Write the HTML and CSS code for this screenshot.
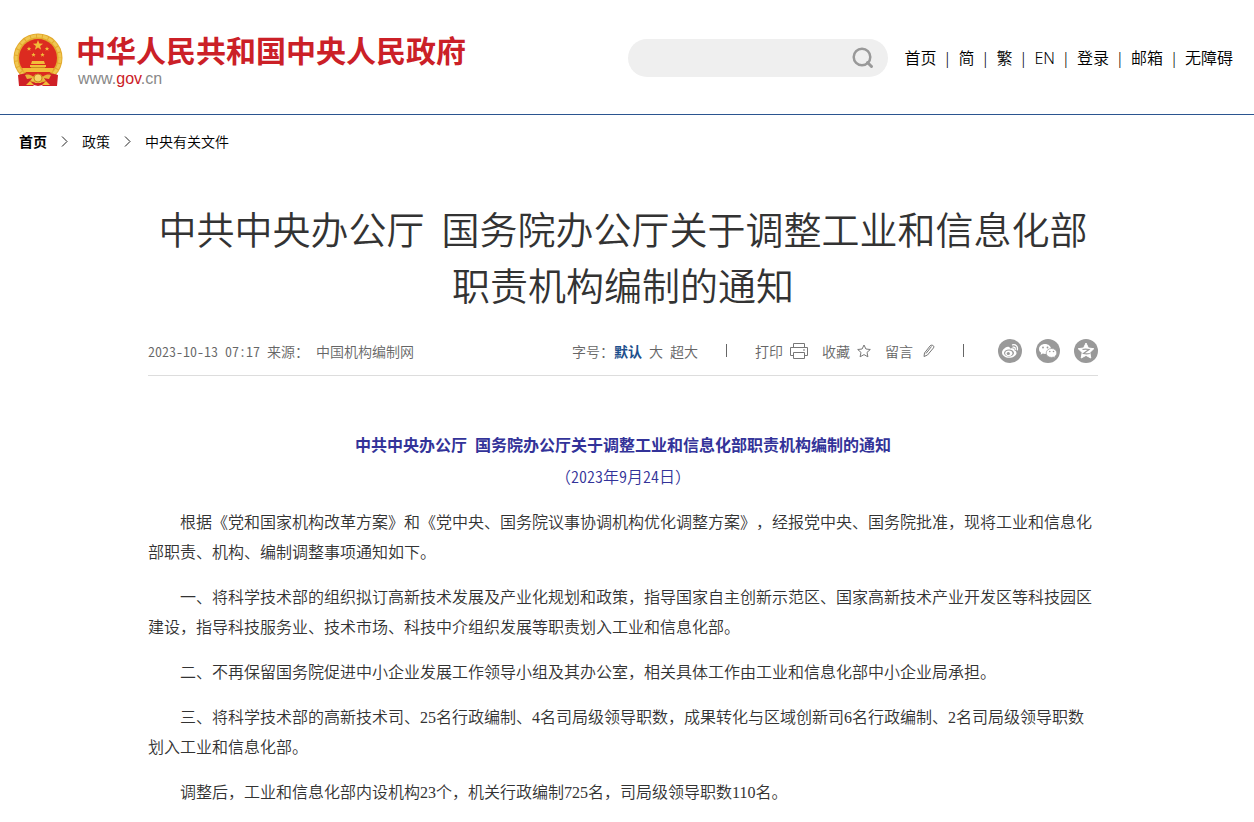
FILE: index.html
```html
<!DOCTYPE html>
<html lang="zh-CN">
  <head>
    <meta charset="UTF-8" />
    <meta name="viewport" content="width=device-width, initial-scale=1.0" />
    <title>中共中央办公厅 国务院办公厅关于调整工业和信息化部职责机构编制的通知</title>
    <link rel="stylesheet" href="styles.css">
  </head>
  <body>
    <header class="header">
      <a class="logo" href="#">
        <svg class="emblem" viewBox="0 0 50 54" aria-hidden="true">
          <path d="M7 36 L6 52 L16 51 L25 53 L34 51 L44 52 L43 36 Z" fill="#cf2027" />
          <circle cx="25" cy="25" r="24.5" fill="#e3a92c" />
          <circle cx="25" cy="25" r="22" fill="none" stroke="#efc650" stroke-width="3" stroke-dasharray="5 1" />
          <circle cx="25" cy="25" r="19" fill="#dc2b20" />
          <path d="M25 7 l1.300 3.600 3.800 .1 -3 2.300 1 3.700 -3.100 -2.200 -3.100 2.200 1 -3.700 -3 -2.300 3.800 -.1z" fill="#f2bd3a" />
          <g fill="#f2bd3a">
            <path id="s" d="M16 13.500l.6 1.500 1.600.100-1.200 1 .4 1.600-1.400-.9-1.400.9.4-1.600-1.200-1 1.600-.1z" />
            <use href="#s" x="18" />
            <use href="#s" x="4.500" y="6" />
            <use href="#s" x="13.500" y="6" />
          </g>
          <path d="M19 28h12l1 3h-14z M17 32h16v2h-16z M9 35h32l-2 4H11z" fill="#f2bd3a" />
          <path d="M18 34.500h14" stroke="#c98a20" />
          <path d="M5 42l8-2 7 4-3 4 4 5H6z M45 42l-8-2-7 4 3 4-4 5h15z" fill="#cf2027" />
          <path d="M12 42c4-1 6 0 8 2l5 2 5-2c2-2 4-3 8-2l-2 4-6-1-2 5h-6l-2-5-6 1z" fill="#e9b43a" />
          <circle cx="25" cy="45" r="4" fill="#f6d36a" stroke="#c98a20" />
          <path d="M13 52l4-4 4 4z M37 52l-4-4-4 4z" fill="#f2bd3a" />
        </svg>
        <span class="logo-text">
          <strong class="logo-name">中华人民共和国中央人民政府</strong>
          <span class="logo-url">www.<em>gov</em>.cn</span>
        </span>
      </a>
      <div class="header-right">
        <form class="search" role="search">
          <input class="search-input" type="text" aria-label="搜索" />
          <button class="search-btn" type="button" aria-label="搜索">
            <svg width="22" height="22" viewBox="0 0 22 22" fill="none" stroke="#999" stroke-width="2.500">
              <circle cx="10" cy="10" r="8.300" />
              <path d="M15.500 15.500l4 4" stroke-width="3" stroke-linecap="round" />
            </svg>
          </button>
        </form>
        <nav class="top-nav">
          <a href="#">首页</a><i>|</i>
          <a href="#">简</a><i>|</i>
          <a href="#">繁</a><i>|</i>
          <a href="#">EN</a><i>|</i>
          <a href="#">登录</a><i>|</i>
          <a href="#">邮箱</a><i>|</i>
          <a href="#">无障碍</a>
        </nav>
      </div>
    </header>

    <nav class="crumbs">
      <a class="crumb-home" href="#">首页</a>
      <svg class="chevron" viewBox="0 0 7 11"><path d="M1 .5l5 5-5 5" /></svg>
      <a href="#">政策</a>
      <svg class="chevron" viewBox="0 0 7 11"><path d="M1 .5l5 5-5 5" /></svg>
      <a href="#">中央有关文件</a>
    </nav>

    <main class="main">
      <h1 class="title">中共中央办公厅&nbsp; 国务院办公厅关于调整工业和信息化部<br>职责机构编制的通知</h1>

      <div class="meta">
        <div class="source">
          <span>2023-10-13</span>
          <span>07:17</span>
          <span>来源：</span>
          <span>中国机构编制网</span>
        </div>
        <div class="tools">
          <div class="font-size">
            <span>字号：<a class="active" href="#">默认</a></span>
            <a href="#">大</a>
            <a href="#">超大</a>
          </div>
          <span class="bar"></span>
          <div class="actions">
            <a href="#">打印
              <svg width="18" height="18" viewBox="0 0 18 18" fill="none" stroke="#777">
                <path d="M3.500 5.500v-4h11v4M3.500 13.500h-3v-8h17v8h-3M3.500 10.500h11v6h-11zM13 8h2" />
              </svg>
            </a>
            <a href="#">收藏
              <svg width="14" height="14" viewBox="0 0 14 14" fill="none" stroke="#777">
                <path d="M7 1l1.900 4 4.400.500-3.300 2.900.9 4.400L7 10.600l-3.900 2.200.9-4.400L.7 5.500 5.100 5z" />
              </svg>
            </a>
            <a class="comment" href="#">留言
              <svg width="12" height="14" viewBox="0 0 12 14" fill="none" stroke="#777">
                <path d="M1 12.500l.5-3.500L7 2q1-1.200 2.200-.8l1.300.7q.8.800 0 2L4.500 11zM8.500 2.500L3 9.500" />
              </svg>
            </a>
          </div>
          <span class="bar"></span>
          <div class="share">
            <a href="#" aria-label="微博">
              <svg width="24" height="24" viewBox="0 0 24 24">
                <circle cx="12" cy="12" r="12" fill="#999" />
                <path d="M11 8c-2-1.500-7 2.300-7 5.500s3.500 5.300 7 5.300c4.400 0 7.500-2.300 7.500-4.800 0-1.600-1.300-2.400-2.200-2.700.6-2-1.500-2.700-4.300-1.700 0-.8-.3-1.300-1-1.600z" fill="#fff" />
                <ellipse cx="11" cy="14" rx="5" ry="3.500" fill="#999" />
                <ellipse cx="10.800" cy="14.200" rx="3.600" ry="2.800" fill="#fff" />
                <circle cx="10.300" cy="14.500" r="1.600" fill="#999" />
                <path d="M14.500 5.800c3.500-.6 5.600 1.800 4.800 5M15 8.100c1.600-.2 2.500.7 2.200 2.200" fill="none" stroke="#fff" stroke-width="1.300" stroke-linecap="round" />
              </svg>
            </a>
            <a href="#" aria-label="微信">
              <svg width="24" height="24" viewBox="0 0 24 24">
                <circle cx="12" cy="12" r="12" fill="#999" />
                <path d="M9 5c-3.400 0-6 2.200-6 5 0 1.600.8 2.900 2.100 3.800l-.5 1.900 2.200-1.100c.7.200 1.500.3 2.200.3 3.400 0 6-2.200 6-4.900S12.400 5 9 5z" fill="#fff" />
                <path d="M15.500 9.500c-3 0-5.300 2-5.300 4.500s2.300 4.400 5.300 4.400c.7 0 1.300-.1 1.900-.3l1.900 1-.5-1.700c1.200-.8 2-2 2-3.400 0-2.500-2.300-4.500-5.300-4.500z" fill="#fff" stroke="#999" stroke-width=".7" />
                <g fill="#999">
                  <circle cx="7" cy="8.500" r=".9" /><circle cx="11.500" cy="8.500" r=".9" />
                  <circle cx="13.800" cy="12.500" r=".8" /><circle cx="17.500" cy="12.500" r=".8" />
                </g>
              </svg>
            </a>
            <a href="#" aria-label="QQ空间">
              <svg width="24" height="24" viewBox="0 0 24 24">
                <circle cx="12" cy="12" r="12" fill="#999" />
                <path d="M12 4l2.400 5 5.400.7-4 3.800 1 5.500-4.800-2.600L7.200 19l1-5.500-4-3.800 5.400-.7z" fill="#fff" stroke="#fff" stroke-linejoin="round" />
                <path d="M8.500 10.500q3-.7 6.500 0l-5.500 4q3 .6 6.300 0" fill="none" stroke="#999" stroke-width="1.200" />
              </svg>
            </a>
          </div>
        </div>
      </div>

      <article class="article">
        <p class="lead"><b>中共中央办公厅&nbsp; 国务院办公厅关于调整工业和信息化部职责机构编制的通知</b><br>（<span class="date">2023年9月24日</span>）</p>
        <p>根据《党和国家机构改革方案》和《党中央、国务院议事协调机构优化调整方案》，经报党中央、国务院批准，现将工业和信息化部职责、机构、编制调整事项通知如下。</p>
        <p>一、将科学技术部的组织拟订高新技术发展及产业化规划和政策，指导国家自主创新示范区、国家高新技术产业开发区等科技园区建设，指导科技服务业、技术市场、科技中介组织发展等职责划入工业和信息化部。</p>
        <p>二、不再保留国务院促进中小企业发展工作领导小组及其办公室，相关具体工作由工业和信息化部中小企业局承担。</p>
        <p>三、将科学技术部的高新技术司、25名行政编制、4名司局级领导职数，成果转化与区域创新司6名行政编制、2名司局级领导职数划入工业和信息化部。</p>
        <p>调整后，工业和信息化部内设机构23个，机关行政编制725名，司局级领导职数110名。</p>
      </article>
    </main>
  </body>
</html>
```
FILE: styles.css
```css
* {
  box-sizing: border-box;
}

body {
  margin: 0;
  background: #fff;
  color: #333;
  font-family: "Noto Sans CJK SC", sans-serif;
  font-size: 14px;
  font-weight: 350;
  text-spacing-trim: space-all;
}

a {
  color: inherit;
  text-decoration: none;
}

/* header */
.header {
  display: flex;
  justify-content: space-between;
  height: 115px;
  padding: 33px 21px 0 13px;
  border-bottom: 1px solid #2b5590;
}

.logo {
  display: flex;
  align-items: flex-start;
  gap: 13px;
}

.emblem {
  width: 50px;
  height: 54px;
}

.logo-text {
  display: flex;
  flex-direction: column;
  margin-top: -2px;
}

.logo-name {
  color: #cb2027;
  font-size: 30px;
  line-height: 36px;
}

.logo-url {
  padding-left: 2px;
  color: #888;
  font-family: "Liberation Sans", Arial, sans-serif;
  font-size: 16px;
  line-height: 24px;
}

.logo-url em {
  color: #cb2027;
  font-style: normal;
}

.header-right {
  display: flex;
  align-items: center;
  gap: 16px;
  height: 50px;
}

.search {
  display: flex;
  align-items: center;
  width: 260px;
  height: 38px;
  padding: 0 14px 0 18px;
  border-radius: 19px;
  background: #efefef;
}

.search-input {
  flex: 1;
  min-width: 0;
  border: 0;
  outline: 0;
  background: none;
  font-size: 16px;
}

.search-btn {
  display: flex;
  padding: 0;
  border: 0;
  background: none;
  cursor: pointer;
}

.top-nav {
  display: flex;
  color: #000;
  font-family: "Noto Sans", "Noto Sans CJK SC", sans-serif;
  font-size: 16px;
  line-height: 24px;
}

.top-nav i {
  width: 22px;
  font-style: normal;
  text-align: center;
}

/* breadcrumb */
.crumbs {
  display: flex;
  align-items: center;
  gap: 14px;
  padding: 15px 19px 0;
  color: #000;
  line-height: 22px;
}

.crumb-home {
  font-weight: bold;
}

.chevron {
  width: 7px;
  height: 11px;
  fill: none;
  stroke: #222;
}

/* content */
.main {
  max-width: 958px;
  margin: 0 auto;
  padding-right: 8px;
}

.title {
  margin: 48px 0 0;
  font-size: 38px;
  font-weight: 350;
  line-height: 56px;
  text-align: center;
}

.meta {
  display: flex;
  justify-content: space-between;
  align-items: center;
  height: 50px;
  margin-top: 14px;
  border-bottom: 1px solid #ddd;
  color: #666;
  font-feature-settings: "hwid";
}

.source,
.font-size {
  display: flex;
  gap: 7px;
}

.tools {
  display: flex;
  align-items: center;
}

.font-size .active {
  color: #1d4f8c;
  font-weight: bold;
}

.bar {
  width: 1px;
  height: 13px;
  margin: 0 28px;
  background: #666;
}

.actions {
  display: flex;
  gap: 14px;
}

.actions a {
  display: flex;
  align-items: center;
  gap: 7px;
}

.actions .comment {
  gap: 10px;
}

.share {
  display: flex;
  gap: 14px;
  padding-left: 6px;
}

.share a {
  display: flex;
}

/* serif digits are half as wide as the characters */
.article {
  padding-top: 55px;
  font-family: "Liberation Serif", "Noto Sans CJK SC", sans-serif;
  font-size: 16px;
  line-height: 30px;
}

.article p {
  margin: 0 0 15px;
  text-indent: 32px;
}

.article .lead {
  color: #339;
  text-align: center;
  text-indent: 0;
}

.date {
  font-family: "Noto Sans CJK SC", sans-serif;
  font-feature-settings: "hwid";
}
```
